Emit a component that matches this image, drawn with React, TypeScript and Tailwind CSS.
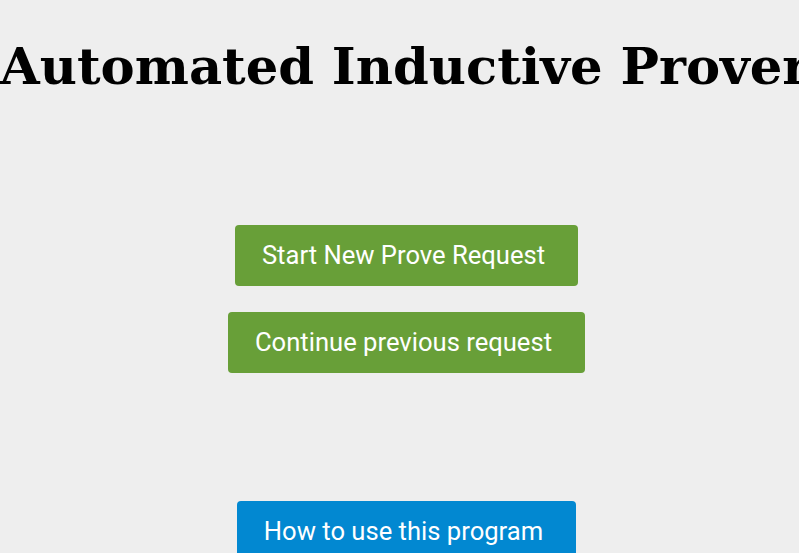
export default function App() {
  return (
    <div className="min-h-[553px] w-full bg-[#eeeeee] overflow-hidden">
      <h1
        className="text-center text-[51.2px] font-bold text-black whitespace-nowrap pt-[36px] leading-[60px]"
        style={{ fontFamily: '"DejaVu Serif", serif' }}
      >
        Automated Inductive Prover
      </h1>
      <div
        className="flex flex-col items-center pl-[14px] pt-[129px]"
        style={{ fontFamily: 'Roboto, sans-serif' }}
      >
        <button className="h-[61px] w-[343px] rounded-[4px] bg-[#689f38] text-white text-[25.6px] pr-[6px]">
          Start New Prove Request
        </button>
        <button className="mt-[26px] h-[61px] w-[357px] rounded-[4px] bg-[#689f38] text-white text-[25.6px] pr-[6px]">
          Continue previous request
        </button>
        <button className="mt-[128px] h-[61px] w-[339px] rounded-[4px] bg-[#0288d1] text-white text-[25.6px] pr-[6px]">
          How to use this program
        </button>
      </div>
    </div>
  );
}
